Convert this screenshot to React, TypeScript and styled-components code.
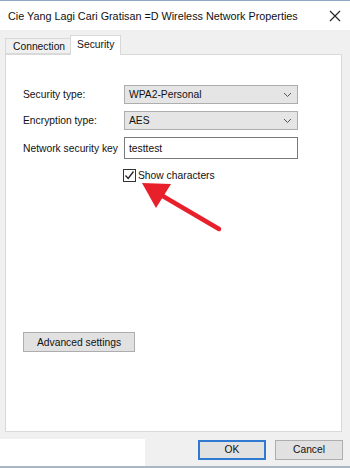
import React, { FC } from 'react';
import styled, { createGlobalStyle } from 'styled-components';

const GlobalStyle = createGlobalStyle`
  html, body {
    margin: 0;
    padding: 0;
    background: #ffffff;
  }
  body {
    font-family: 'Liberation Sans', Arial, sans-serif;
    color: #000;
  }
`;

const StyledWindow = styled.div`
  position: relative;
  width: 350px;
  height: 468px;
  display: flex;
  flex-direction: column;
  background: #f0f0f0;
  border-top: 1px solid #8fa9c4;
  border-bottom: 2px solid #a9b7c4;
  box-sizing: border-box;
  overflow: hidden;
`;

const StyledTitleBar = styled.div`
  height: 29px;
  flex: none;
  display: flex;
  align-items: center;
  justify-content: space-between;
  padding: 0 8px 0 8px;
  background: #ffffff;
`;

const StyledTitle = styled.span`
  font-size: 10.8px;
  white-space: nowrap;
  color: #111;
`;

const StyledClose = styled.span`
  display: flex;
  width: 12px;
  height: 12px;
  margin-right: 1px;
`;

const StyledBody = styled.div`
  flex: 1;
  display: flex;
  flex-direction: column;
  padding: 5px 8px 0 5px;
`;

const StyledTabs = styled.div`
  display: flex;
  align-items: flex-end;
  height: 19px;
`;

const StyledTab = styled.div<{ active?: boolean }>`
  display: flex;
  align-items: center;
  font-size: 10.3px;
  color: #111;
  border: 1px solid #d9d9d9;
  box-sizing: border-box;
  background: ${p => (p.active ? '#ffffff' : '#f0f0f0')};
  height: ${p => (p.active ? '20px' : '16px')};
  padding: ${p => (p.active ? '0 6px 3px 6px' : '0 5px 0 7px')};
  margin-bottom: ${p => (p.active ? '-1px' : '0')};
  border-bottom: ${p => (p.active ? 'none' : '1px solid #d9d9d9')};
  border-right: ${p => (p.active ? '1px solid #d9d9d9' : 'none')};
  position: relative;
  z-index: ${p => (p.active ? 1 : 0)};
`;

const StyledPanel = styled.div`
  flex: 1;
  display: flex;
  flex-direction: column;
  background: #ffffff;
  border: 1px solid #d9d9d9;
  padding: 30px 0 79px 16px;
  box-sizing: border-box;
  margin-bottom: 7px;
`;

const StyledForm = styled.div`
  display: grid;
  grid-template-columns: 102px 174px;
  align-items: center;
  row-gap: 7px;
`;

const StyledLabel = styled.span`
  font-size: 10.3px;
  white-space: nowrap;
  color: #111;
  padding-left: 1px;
`;

const StyledSelect = styled.div`
  height: 19px;
  box-sizing: border-box;
  display: flex;
  align-items: center;
  justify-content: space-between;
  padding: 0 5px 0 4px;
  background: #e5e5e5;
  border: 1px solid #adadad;
  font-size: 10.3px;
  color: #111;
`;

const StyledInput = styled.div`
  height: 22px;
  box-sizing: border-box;
  display: flex;
  align-items: center;
  padding: 0 4px;
  background: #ffffff;
  border: 1px solid #7a7a7a;
  font-size: 10.3px;
  color: #111;
`;

const StyledCheckRow = styled.label`
  grid-column: 2;
  display: flex;
  align-items: center;
  gap: 2px;
  margin-top: 3px;
  margin-left: -1px;
  font-size: 10.3px;
  color: #111;
`;

const StyledCheckbox = styled.span`
  width: 13px;
  height: 13px;
  box-sizing: border-box;
  border: 1px solid #333;
  background: #fff;
  display: flex;
  align-items: center;
  justify-content: center;
`;

const StyledButton = styled.button<{ primary?: boolean }>`
  font-family: 'Liberation Sans', Arial, sans-serif;
  font-size: 10.3px;
  color: #111;
  background: #e1e1e1;
  border: 1px solid ${p => (p.primary ? '#2f7ad0' : '#adadad')};
  box-shadow: ${p => (p.primary ? 'inset 0 0 0 1px #2f7ad0' : 'none')};
  height: 20px;
  padding: 0;
  display: flex;
  align-items: center;
  justify-content: center;
`;

const StyledAdvanced = styled(StyledButton)`
  margin-top: auto;
  margin-left: 1px;
  width: 112px;
`;

const StyledFooter = styled.div`
  display: flex;
  align-items: center;
  height: 27px;
  margin: 0 -8px 0 -5px;
  padding-right: 7px;
`;

const StyledPatch = styled.div`
  width: 145px;
  align-self: stretch;
  background: #ffffff;
`;

const StyledFooterButtons = styled.div`
  margin-left: auto;
  display: flex;
  gap: 9px;
  margin-top: -6px;
`;

const StyledDialogButton = styled(StyledButton)`
  width: 68px;
`;

const StyledArrow = styled.svg`
  position: absolute;
  left: 135px;
  top: 175px;
  pointer-events: none;
`;

const Chevron: FC = () => (
  <svg width="9" height="6" viewBox="0 0 9 6">
    <path d="M1 1 L4.5 4.5 L8 1" fill="none" stroke="#555" strokeWidth="1" />
  </svg>
);

const App: FC = () => (
  <>
    <GlobalStyle />
    <StyledWindow>
      <StyledTitleBar>
        <StyledTitle>Cie Yang Lagi Cari Gratisan =D Wireless Network Properties</StyledTitle>
        <StyledClose>
          <svg width="12" height="12" viewBox="0 0 12 12">
            <path d="M1 1 L11 11 M11 1 L1 11" stroke="#222" strokeWidth="1.1" />
          </svg>
        </StyledClose>
      </StyledTitleBar>
      <StyledBody>
        <StyledTabs>
          <StyledTab>Connection</StyledTab>
          <StyledTab active>Security</StyledTab>
        </StyledTabs>
        <StyledPanel>
          <StyledForm>
            <StyledLabel>Security type:</StyledLabel>
            <StyledSelect>
              WPA2-Personal
              <Chevron />
            </StyledSelect>
            <StyledLabel>Encryption type:</StyledLabel>
            <StyledSelect>
              AES
              <Chevron />
            </StyledSelect>
            <StyledLabel>Network security key</StyledLabel>
            <StyledInput>testtest</StyledInput>
            <StyledCheckRow>
              <StyledCheckbox>
                <svg width="11" height="11" viewBox="0 0 11 11">
                  <path d="M1.5 5.5 L4.2 8.5 L9.5 1.5" fill="none" stroke="#222" strokeWidth="1.3" />
                </svg>
              </StyledCheckbox>
              Show characters
            </StyledCheckRow>
          </StyledForm>
          <StyledAdvanced>Advanced settings</StyledAdvanced>
        </StyledPanel>
        <StyledFooter>
          <StyledPatch />
          <StyledFooterButtons>
            <StyledDialogButton primary>OK</StyledDialogButton>
            <StyledDialogButton>Cancel</StyledDialogButton>
          </StyledFooterButtons>
        </StyledFooter>
      </StyledBody>
      <StyledArrow width="90" height="60" viewBox="0 0 90 60">
        <path d="M84 53 L26 19" stroke="#e8202a" strokeWidth="4.5" strokeLinecap="round" />
        <path d="M7 7 L36 8 L21 32 Z" fill="#e8202a" />
      </StyledArrow>
    </StyledWindow>
  </>
);

export default App;
